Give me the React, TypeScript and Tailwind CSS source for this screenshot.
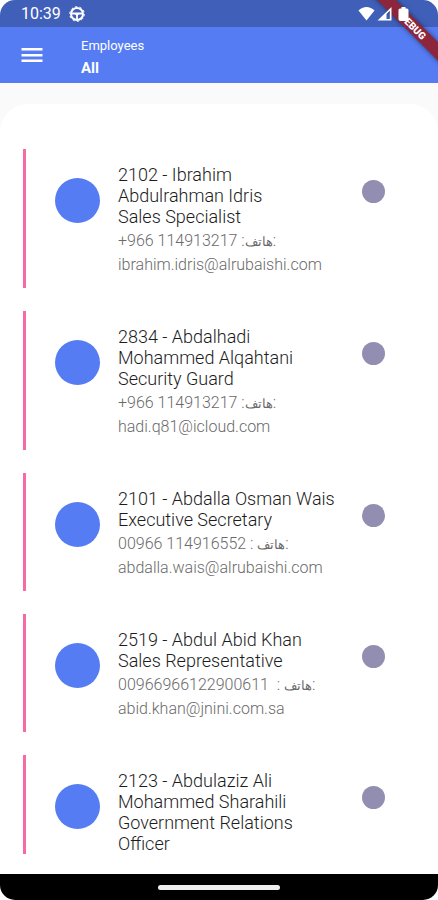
type Employee = {
  code: string;
  title: string[];
  phone?: string;
  email?: string;
};

const employees: Employee[] = [
  {
    code: "2102",
    title: ["2102 - Ibrahim", "Abdulrahman Idris", "Sales Specialist"],
    phone: "+966 114913217 :",
    email: "ibrahim.idris@alrubaishi.com",
  },
  {
    code: "2834",
    title: ["2834 - Abdalhadi", "Mohammed Alqahtani", "Security Guard"],
    phone: "+966 114913217 :",
    email: "hadi.q81@icloud.com",
  },
  {
    code: "2101",
    title: ["2101 - Abdalla Osman Wais", "Executive Secretary"],
    phone: "00966 114916552 : ",
    email: "abdalla.wais@alrubaishi.com",
  },
  {
    code: "2519",
    title: ["2519 - Abdul Abid Khan", "Sales Representative"],
    phone: "00966966122900611  : ",
    email: "abid.khan@jnini.com.sa",
  },
  {
    code: "2123",
    title: ["2123 - Abdulaziz Ali", "Mohammed Sharahili", "Government Relations", "Officer"],
  },
];

function StatusBar() {
  return (
    <div className="flex h-[27px] shrink-0 items-center justify-between bg-[#405fb8] pr-[29px] pl-[21px] text-white">
      <div className="flex items-center gap-2 pt-px">
        <span className="text-[16px] leading-5">10:39</span>
        <svg className="size-4" viewBox="0 0 16 16" fill="none" stroke="currentColor">
          <circle cx="8" cy="8" r="6" strokeWidth="2" />
          <circle cx="8" cy="8" r="7.3" strokeWidth="1" strokeDasharray="2.300 2.300" />
          <path d="M2.500 7.500h11M8 8v5.500" strokeWidth="1.8" />
          <path d="M5.500 7.500h5L8 10.500z" fill="currentColor" stroke="none" />
        </svg>
      </div>
      <div className="relative z-10 flex items-center gap-[2px]">
        <svg className="h-4 w-[17px]" viewBox="0 0 17 16" fill="currentColor">
          <path d="M8.500 14.500L.5 4.500C5-.2 12-.2 16.500 4.500z" />
        </svg>
        <svg className="h-4 w-[15px]" viewBox="0 0 15 16" fill="currentColor">
          <path d="M14.500 1v13.500H.5zM12.800 4.800L9.500 8v5h3.300z" fillRule="evenodd" />
        </svg>
        <svg className="ml-1 h-4 w-[11px]" viewBox="0 0 11 16" fill="currentColor">
          <path d="M3.500 1h4v1.500H9q1.500 0 1.500 1.500v9q0 2-2 2h-6q-2 0-2-2V4q0-1.500 1.500-1.500h1.500z" />
        </svg>
      </div>
    </div>
  );
}

function AppBar() {
  return (
    <header className="flex h-14 shrink-0 items-center bg-[#557cf3] text-white">
      <button type="button" aria-label="Open menu" className="ml-[21px] flex h-10 w-[22px] items-center">
        <svg className="h-4 w-[22px]" viewBox="0 0 22 16" fill="currentColor">
          <path d="M.5 1h21v2.400H.5zM.5 7h21v2.400H.5zM.5 12.600h21V15H.5z" />
        </svg>
      </button>
      <div className="ml-[38px] pt-1">
        <p className="text-[13px] leading-[22px]">Employees</p>
        <h1 className="text-[15px] leading-[22px] font-bold">All</h1>
      </div>
    </header>
  );
}

function EmployeeRow({ employee }: { employee: Employee }) {
  return (
    <li className="flex border-l-[3px] border-[#f66ba4] pt-[15px] pr-[53px]">
      <span className="mt-[14px] ml-[29px] size-[45px] shrink-0 rounded-full bg-[#557cf3]" />
      <div className="ml-[18px] min-w-0 flex-1 whitespace-nowrap">
        <h2 className="text-[18px] leading-[21px] font-light text-[#1c1c1c]">
          {employee.title.map((line) => (
            <span key={line} className="block">
              {line}
            </span>
          ))}
        </h2>
        {employee.phone && (
          <div className="pt-[2px] pb-[11px] text-[16px] leading-6 font-light text-[#6a6a6a]">
            <p dir="ltr" className="h-6 whitespace-pre">
              {employee.phone}
              <span className="text-[13px]">هاتف</span>:
            </p>
            <p>{employee.email}</p>
          </div>
        )}
      </div>
      <span className="mt-[16px] size-[23px] shrink-0 rounded-full bg-[#918eb2]" />
    </li>
  );
}

function DebugBanner() {
  return (
    <div className="pointer-events-none absolute top-0 right-0 size-[70px] overflow-hidden">
      <div className="absolute top-[20px] right-[-30px] flex h-[13px] w-[110px] rotate-45 items-center justify-center bg-[#8b263c] text-[10px] leading-none font-black text-white shadow-[0_0_5px_rgba(0,0,0,0.5)]">
        DEBUG
      </div>
    </div>
  );
}

export default function App() {
  return (
    <div className="h-screen bg-white font-[Roboto,'DejaVu_Sans',sans-serif]">
      <div className="relative flex h-full flex-col overflow-hidden rounded-[15px] bg-[#fafafa]">
        <StatusBar />
        <AppBar />
        <main className="mt-[21px] flex min-h-0 flex-1 flex-col rounded-t-[28px] bg-white pt-[45px] pb-5">
          <ul className="flex min-h-0 flex-1 flex-col gap-[23px] overflow-y-auto pl-[23px] [scrollbar-width:none] *:shrink-0">
            {employees.map((employee) => (
              <EmployeeRow key={employee.code} employee={employee} />
            ))}
          </ul>
        </main>
        <footer className="flex h-[26px] shrink-0 items-center justify-center bg-black">
          <span className="h-[5px] w-[122px] rounded-full bg-[#eeeeee]" />
        </footer>
        <DebugBanner />
      </div>
    </div>
  );
}
